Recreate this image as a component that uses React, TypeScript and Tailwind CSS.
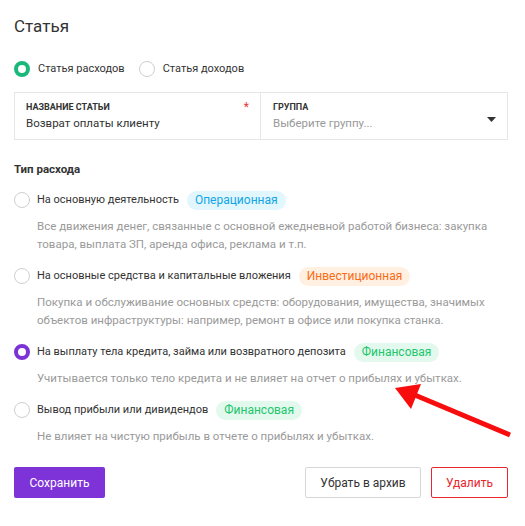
import React from "react";

const font = { fontFamily: "Roboto, 'Noto Sans', sans-serif" };

function Radio({ checked, color }: { checked?: boolean; color?: string }) {
  if (checked) {
    return (
      <span
        className={`box-border inline-block h-4 w-4 shrink-0 rounded-full border-[4px] ${color}`}
      />
    );
  }
  return <span className="box-border inline-block h-4 w-4 shrink-0 rounded-full border border-[#cfcfcf] bg-white" />;
}

type Opt = {
  label: string;
  badge: string;
  badgeCls: string;
  desc: string[];
  checked?: boolean;
};

const opts: Opt[] = [
  {
    label: "На основную деятельность",
    badge: "Операционная",
    badgeCls: "bg-[#e1f6fd] text-[#12a6e6]",
    desc: [
      "Все движения денег, связанные с основной ежедневной работой бизнеса: закупка",
      "товара, выплата ЗП, аренда офиса, реклама и т.п.",
    ],
  },
  {
    label: "На основные средства и капитальные вложения",
    badge: "Инвестиционная",
    badgeCls: "bg-[#fff0e2] text-[#fb6a12]",
    desc: [
      "Покупка и обслуживание основных средств: оборудования, имущества, значимых",
      "объектов инфраструктуры: например, ремонт в офисе или покупка станка.",
    ],
  },
  {
    label: "На выплату тела кредита, займа или возвратного депозита",
    badge: "Финансовая",
    badgeCls: "bg-[#e4f9ee] text-[#21c66c]",
    desc: ["Учитывается только тело кредита и не влияет на отчет о прибылях и убытках."],
    checked: true,
  },
  {
    label: "Вывод прибыли или дивидендов",
    badge: "Финансовая",
    badgeCls: "bg-[#e4f9ee] text-[#21c66c]",
    desc: ["Не влияет на чистую прибыль в отчете о прибылях и убытках."],
  },
];

export default function App() {
  return (
    <div className="relative h-[526px] w-[525px] overflow-hidden bg-white text-[#333]" style={font}>
      <div className="flex flex-col pl-[14px] pr-[17px] pt-[14px]">
        <h1 className="text-[17px] leading-[24px] font-normal text-[#333]">Статья</h1>

        <div className="mt-[21px] flex h-[20px] items-center text-[11px]">
          <Radio checked color="border-[#1ab97b]" />
          <span className="ml-[8px]">Статья расходов</span>
          <span className="ml-[14px]" />
          <Radio />
          <span className="ml-[8px]">Статья доходов</span>
        </div>

        <div className="mt-[13px] flex h-[48px] border border-[#e6e6e6]">
          <div className="relative flex w-[246px] flex-col justify-center border-r border-[#e6e6e6] pl-[11px]">
            <div className="text-[9px] font-bold uppercase leading-[13px] text-[#333]">Название статьи</div>
            <div className="text-[11.5px] leading-[18px]">Возврат оплаты клиенту</div>
            <span className="absolute right-[11px] top-[8px] text-[12px] leading-[12px] text-[#e53935]">*</span>
          </div>
          <div className="relative flex flex-1 flex-col justify-center pl-[12px]">
            <div className="text-[9px] font-bold uppercase leading-[13px] text-[#333]">Группа</div>
            <div className="text-[11.5px] leading-[18px] text-[#999]">Выберите группу...</div>
            <svg className="absolute right-[11px] top-[24px]" width="9" height="5" viewBox="0 0 9 5">
              <path d="M0 0h9L4.5 5z" fill="#333" />
            </svg>
          </div>
        </div>

        <div className="mt-[20px] text-[11.5px] font-bold leading-[18px]">Тип расхода</div>

        <div className="mt-[12px] flex flex-col gap-[13px]">
          {opts.map((o, i) => (
            <div key={i} className="flex flex-col">
              <div className="flex h-[20px] items-center">
                <Radio checked={o.checked} color="border-[#7b32d6]" />
                <span className="ml-[7px] text-[11px] leading-[20px]">{o.label}</span>
                <span className={`ml-[8px] rounded-full px-[8px] text-[12px] leading-[19px] ${o.badgeCls}`}>
                  {o.badge}
                </span>
              </div>
              <div className="mt-[7px] pl-[23px] text-[11.5px] leading-[18px] text-[#9a9a9a]">
                {o.desc.map((d, j) => (
                  <div key={j} className="whitespace-nowrap">{d}</div>
                ))}
              </div>
            </div>
          ))}
        </div>

        <div className="mt-[22px] flex items-center">
          <button className="h-[31px] w-[91px] rounded-[2px] bg-[#7d33d7] text-[12px] text-white">Сохранить</button>
          <div className="flex-1" />
          <button className="h-[31px] w-[116px] rounded-[2px] border border-[#d6d6d6] bg-white text-[12px] text-[#333]">
            Убрать в архив
          </button>
          <button className="ml-[10px] h-[31px] w-[77px] rounded-[2px] border border-[#e8262c] bg-white text-[12px] text-[#e8262c]">
            Удалить
          </button>
        </div>
      </div>

      <svg className="pointer-events-none absolute left-0 top-0" width="525" height="526">
        <line x1="510" y1="435" x2="410" y2="393" stroke="#f70d0d" strokeWidth="5" />
        <polygon points="395,388 421,384 411,409" fill="#f70d0d" />
      </svg>
    </div>
  );
}
